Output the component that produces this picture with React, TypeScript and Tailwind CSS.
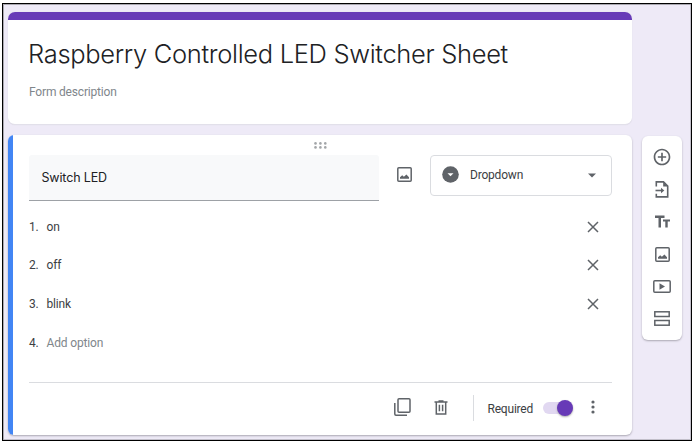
import React from "react";

const ROBOTO = "font-['Roboto','Liberation_Sans',sans-serif]";
const DISPLAY = "font-['Inter','Open_Sans',sans-serif]";

function Icon({ size = 20, children }: { size?: number; children: React.ReactNode }) {
  return (
    <svg width={size} height={size} viewBox="0 0 24 24" fill="#5f6368" className="block shrink-0">
      {children}
    </svg>
  );
}

function ImageIcon() {
  return (
    <svg width="15" height="15" viewBox="0 0 15 15" className="block shrink-0">
      <rect x="0.8" y="0.8" width="13.4" height="13.4" rx="1" fill="none" stroke="#5f6368" strokeWidth="1.5" />
      <path d="M3 11.7V10.3L5.2 8.2L6.9 9.8L9.4 7.4L12 10.2V11.7Z" fill="#5f6368" />
    </svg>
  );
}

function CloseIcon() {
  return (
    <svg width="12" height="12" viewBox="0 0 12 12" className="block shrink-0">
      <path d="M1 1L11 11M11 1L1 11" stroke="#5f6368" strokeWidth="1.5" />
    </svg>
  );
}

function Option({ n, label, dim = false }: { n: number; label: string; dim?: boolean }) {
  return (
    <div className="flex h-[38.8px] items-center pr-[13.5px]">
      <span className="w-[17.5px] text-[12px] tracking-[-0.3px] text-[#3c4043]">{n}.</span>
      <span className={`grow text-[12px] tracking-[-0.15px] ${dim ? "text-[#80868b]" : "text-[#3c4043]"}`}>{label}</span>
      {!dim && <CloseIcon />}
    </div>
  );
}

function TitleCard() {
  return (
    <section className="h-[113px] overflow-hidden rounded-[7px] border-b border-[#e2e0ea] bg-white shadow-[0_0_1px_#d5d2df]">
      <div className="h-2 bg-[#673ab7]" />
      <div className="pl-[20px]">
        <h1 className={`${DISPLAY} mt-[17px] h-[34px] text-[25.5px] leading-[34px] font-light tracking-[-0.32px] whitespace-nowrap text-[#202124]`}>
          Raspberry Controlled LED Switcher Sheet
        </h1>
        <p className="mt-[13px] pl-px text-[12px] leading-[16px] tracking-[-0.18px] text-[#80868b]">Form description</p>
      </div>
    </section>
  );
}

function QuestionCard() {
  return (
    <section className="mt-[10px] flex h-[300px] overflow-hidden rounded-[6px] bg-white shadow-[0_1px_2px_#aaa7b2]">
      <div className="w-[5px] shrink-0 bg-[#4285f4]" />
      <div className="flex grow flex-col pr-5 pl-[16px]">
        <div className="flex h-5 justify-center pt-[7px]">
          <svg width="13" height="7" viewBox="0 0 13 7" fill="#a3a6a9" className="block">
            <circle cx="1.5" cy="1.4" r="1.3" />
            <circle cx="6.4" cy="1.4" r="1.3" />
            <circle cx="11.3" cy="1.4" r="1.3" />
            <circle cx="1.5" cy="5.4" r="1.3" />
            <circle cx="6.4" cy="5.4" r="1.3" />
            <circle cx="11.3" cy="5.4" r="1.3" />
          </svg>
        </div>
        <div className="flex h-[46px] items-start">
          <div className={`${DISPLAY} flex h-[46px] w-[350px] items-center rounded-t-[3px] border-b border-[#9da1a6] bg-[#f8f9fa] pt-0.5 pl-[12.5px] text-[12.5px] tracking-[-0.15px] text-[#202124]`}>
            Switch LED
          </div>
          <div className="pt-[12px] pl-[18px]">
            <ImageIcon />
          </div>
          <div className="ml-[18px] flex h-[41px] w-[182px] items-center rounded-[4px] border border-[#dadce0] pr-[15px] pl-[11px]">
            <svg width="17" height="17" viewBox="0 0 17 17" className="-mt-0.5 block">
              <circle cx="8.5" cy="8.5" r="8.3" fill="#5f6368" />
              <path d="M5.5 7.2H11.5L8.5 10.2Z" fill="white" />
            </svg>
            <span className="-mt-px grow pl-[11px] text-[12px] tracking-[-0.2px] text-[#3c4043]">Dropdown</span>
            <svg width="8" height="5" viewBox="0 0 8 5" className="block">
              <path d="M0 0.5H8L4 4.5Z" fill="#5f6368" />
            </svg>
          </div>
        </div>
        <div className="h-[182px] border-b border-[#dadce0] pt-[6.2px]">
          <Option n={1} label="on" />
          <Option n={2} label="off" />
          <Option n={3} label="blink" />
          <Option n={4} label="Add option" dim />
        </div>
        <div className="flex h-[50px] items-center justify-end">
          <svg width="17" height="18" viewBox="0 0 17 18" fill="none" stroke="#5f6368" strokeWidth="1.5" className="-mt-0.5 block">
            <rect x="4" y="0.8" width="12" height="13.4" rx="1" />
            <path d="M0.8 5V16Q0.8 17.2 2 17.2H13" />
          </svg>
          <svg width="14" height="15" viewBox="0 0 14 15" fill="none" stroke="#5f6368" strokeWidth="1.5" className="-mt-px ml-[23px] block">
            <path d="M0.5 2H13.5M4.5 1H9.5M2.3 2V14H11.7V2M5.4 4.7V11.3M8.6 4.7V11.3" />
          </svg>
          <div className="ml-[25px] h-[26px] w-px bg-[#dadce0]" />
          <span className="ml-[13.5px] w-[46.5px] pt-px text-[12px] tracking-[-0.2px] whitespace-nowrap text-[#3c4043]">Required</span>
          <div className="ml-[9px] flex h-[12px] w-[30px] items-center justify-end rounded-full bg-[#e1d8f1]">
            <div className="size-4 shrink-0 rounded-full bg-[#673ab7] shadow-[0_1px_2px_#aaa]" />
          </div>
          <svg width="4" height="14" viewBox="0 0 4 14" fill="#5f6368" className="-mt-0.5 mr-[17.5px] ml-[17.5px] block">
            <circle cx="2" cy="2" r="1.6" />
            <circle cx="2" cy="7" r="1.6" />
            <circle cx="2" cy="12" r="1.6" />
          </svg>
        </div>
      </div>
    </section>
  );
}

function Toolbar() {
  return (
    <aside className="mt-[124px] ml-[10px] flex h-[204px] w-10 flex-col items-center rounded-[6px] bg-white pt-[5px] shadow-[0_1px_2px_#aaa7b2]">
      <div className="flex h-[32.4px] items-center">
        <Icon>
          <path d="M13 7h-2v4H7v2h4v4h2v-4h4v-2h-4V7zm-1-5C6.48 2 2 6.48 2 12s4.480 10 10 10 10-4.480 10-10S17.520 2 12 2zm0 18c-4.410 0-8-3.590-8-8s3.590-8 8-8 8 3.590 8 8-3.590 8-8 8z" />
        </Icon>
      </div>
      <div className="flex h-[32.4px] items-center">
        <svg width="14" height="17" viewBox="0 0 14 17" fill="none" stroke="#5f6368" strokeWidth="1.6" className="block">
          <path d="M1.300 5.500V0.900H8.500L12.700 5.100V15.900H1.300V12.700" />
          <path d="M8.200 1V5.500H12.700Z" fill="#5f6368" stroke="none" />
          <path d="M0.500 9.500H7" />
          <path d="M6 6.700L9.300 9.500L6 12.300Z" fill="#5f6368" stroke="none" />
        </svg>
      </div>
      <div className="flex h-[32.4px] items-center">
        <svg width="15" height="13" viewBox="0 0 15 13" fill="#5f6368" className="block">
          <path d="M0 0.500H9.500V2.900H6V12.500H3.500V2.900H0Z" />
          <path d="M8 4.500H15V6.600H12.700V12.500H10.300V6.600H8Z" />
        </svg>
      </div>
      <div className="flex h-[32.4px] items-center">
        <ImageIcon />
      </div>
      <div className="flex h-[32.4px] items-center">
        <svg width="18" height="13" viewBox="0 0 18 13" className="block">
          <rect x="0.800" y="0.800" width="16.400" height="11.400" rx="1" fill="none" stroke="#5f6368" strokeWidth="1.500" />
          <path d="M6.500 3.300L12 6.500L6.500 9.700Z" fill="#5f6368" />
        </svg>
      </div>
      <div className="flex h-[31px] items-center">
        <svg width="16" height="15" viewBox="0 0 16 15" fill="none" stroke="#5f6368" strokeWidth="1.500" className="block">
          <rect x="0.800" y="0.800" width="14.400" height="4.700" />
          <rect x="0.800" y="9.500" width="14.400" height="4.700" />
        </svg>
      </div>
    </aside>
  );
}

export default function App() {
  return (
    <div className={`${ROBOTO} h-[444px] w-[696px] overflow-hidden bg-white pt-[3px] pl-[2px]`}>
      <div className="flex h-[438px] w-[690px] items-start overflow-hidden border border-black bg-[#eeeaf7] pt-[8px] pl-[5px] shadow-[inset_1px_1px_0_#aaa8b0,inset_-1px_-1px_0_#c2bfca]">
        <main className="w-[624px] shrink-0">
          <TitleCard />
          <QuestionCard />
        </main>
        <Toolbar />
      </div>
    </div>
  );
}
